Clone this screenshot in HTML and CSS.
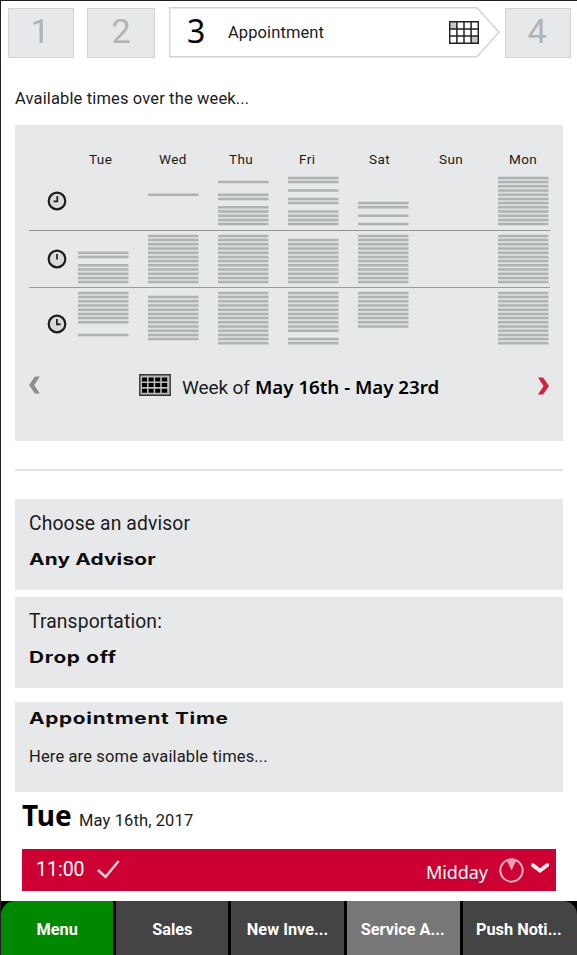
FILE: index.html
```html
<!DOCTYPE html>
<html lang="en">
<head>
<meta charset="utf-8">
<title>Service Appointment</title>
<link rel="stylesheet" href="styles.css">
</head>
<body>
<div class="app">
  <nav class="steps">
    <div class="step step-1"><span>1</span></div>
    <div class="step step-2"><span>2</span></div>
    <div class="step-current">
      <svg class="arrow" width="331" height="51" viewBox="0 0 331 51"><path d="M.8 .8H308L330 25.3L308 49.8H.8Z" fill="#fff" stroke="#d2d3d3" stroke-width="1.4"/></svg>
      <span class="number">3</span>
      <span class="label">Appointment</span>
      <svg class="calendar" width="30" height="23" viewBox="0 0 30 23"><path fill="#fff" d="M0 0h30v23H0z"/><path fill="#c8c8c8" d="M1 1h7v7H1zM22 15h7v7h-7z"/><path d="M.7 .7H29.3V22.3H.7ZM7.9 0V23M15 0V23M22.1 0V23M0 8H30M0 15H30" fill="none" stroke="#222" stroke-width="1.5"/></svg>
    </div>
    <div class="step step-4"><span>4</span></div>
  </nav>

  <main>
    <p class="intro">Available times over the week...</p>

    <section class="week">
      <div class="days"><span>Tue</span><span>Wed</span><span>Thu</span><span>Fri</span><span>Sat</span><span>Sun</span><span>Mon</span></div>
      <div class="period morning">
        <svg class="clock" width="20" height="20" viewBox="0 0 20 20"><circle cx="10" cy="10" r="8.3"/><path d="M10.3 5V10.4H6.5"/></svg>
      </div>
      <div class="period midday">
        <svg class="clock" width="20" height="20" viewBox="0 0 20 20"><circle cx="10" cy="10" r="8.3"/><path d="M10 5V10.5"/></svg>
      </div>
      <div class="period evening">
        <svg class="clock" width="20" height="20" viewBox="0 0 20 20"><circle cx="10" cy="10" r="8.3"/><path d="M9.9 5V10.4H13.7"/></svg>
      </div>
      <div class="pager">
        <svg class="prev" width="12" height="20" viewBox="0 0 12 20"><path d="M0 10L6 1.5H10.8L5.2 10L10.8 18.5H6Z" fill="#8c8d8e"/></svg>
        <svg class="grid-icon" width="32" height="22" viewBox="0 0 32 22"><path d="M.8 .8H31.2V21.2H.8Z" fill="#b9babb" stroke="#333" stroke-width="1.4"/><path d="M3 3.4h5v4H3zM9.6 3.4h5v4h-5zM16.2 3.4h5v4h-5zM22.8 3.4h5.4v4h-5.4zM3 9h5v4H3zM9.6 9h5v4h-5zM16.2 9h5v4h-5zM22.8 9h5.4v4h-5.4zM3 14.7h5v4H3zM9.6 14.7h5v4h-5zM16.2 14.7h5v4h-5zM22.8 14.7h5.4v4h-5.4z" fill="#000"/></svg>
        <span class="week-of">Week of</span>
        <strong>May 16th - May 23rd</strong>
        <svg class="next" width="12" height="20" viewBox="0 0 12 20"><path d="M12 10L6 1.5H1L6.6 10L1 18.5H6Z" fill="#d51f3d"/></svg>
      </div>
    </section>

    <hr>

    <section class="card advisor"><p>Choose an advisor</p><h2>Any Advisor</h2></section>
    <section class="card transport"><p>Transportation:</p><h2>Drop off</h2></section>
    <section class="card time"><h2>Appointment Time</h2><p>Here are some available times...</p></section>

    <div class="date"><strong>Tue</strong><span>May 16th, 2017</span></div>
    <div class="slot">
      <span class="hour">11:00</span>
      <svg class="check" width="23" height="19" viewBox="0 0 23 19"><path d="M1 10L8.5 17L21.7 1" fill="none" stroke="#f6ccd5" stroke-width="2.5"/></svg>
      <span class="part">Midday</span>
      <svg class="dial" width="25" height="25" viewBox="0 0 25 25"><circle cx="12.5" cy="12.5" r="11.2" fill="none" stroke="#f3b5c3" stroke-width="1.9"/><path d="M8 3Q12.5 .5 17 3L12.6 12.5Z" fill="#ef9db0"/></svg>
      <svg class="down" width="18" height="11" viewBox="0 0 18 11"><path d="M0 .5H3L9 5.2L15 .5H18V3.2L9 10L0 3.2Z" fill="#fbe9ec"/></svg>
    </div>
  </main>

  <footer class="tabs">
    <div class="tab menu">Menu</div>
    <div class="tab">Sales</div>
    <div class="tab">New Inve...</div>
    <div class="tab active">Service A...</div>
    <div class="tab">Push Noti...</div>
  </footer>
</div>
<script src="chart.js"></script>
</body>
</html>
```
FILE: styles.css
```css
* { box-sizing: border-box; }
body { margin: 0; background: #fff; color: #1b1b1b; font-family: Roboto, "Liberation Sans", sans-serif; }
p, h2 { margin: 0; }
svg { display: block; flex: none; }
.app { height: 955px; display: flex; flex-direction: column; overflow: hidden; border-top: 1px solid #231f20; border-left: 1px solid #231f20; }
.steps { display: flex; height: 50px; margin: 6px 0 0 6px; flex: none; }
.step { height: 50px; margin-top: 1px; border: 1.5px solid #d3d4d4; background: #e7e8e9; color: #b1b3b4; font-size: 34px; line-height: 44px; text-align: center; }
.step-1 { width: 66px; margin-left: 1px; padding-right: 2px; }
.step-2 { width: 68px; margin-left: 13px; }
.step-4 { width: 66px; margin-left: 5px; padding-right: 2px; }
.step-current { position: relative; display: flex; width: 331px; height: 51px; margin-left: 14px; }
.arrow { position: absolute; inset: 0; }
.number, .label, .calendar { position: relative; }
.number { width: 20px; margin-left: 18px; font: 32px/48px "Noto Sans", sans-serif; color: #000; }
.label { width: 97px; margin-left: 21px; font-size: 16.5px; line-height: 52px; white-space: nowrap; letter-spacing: .1px; }
.calendar { margin: 14px 0 0 124px; }
main { flex: 1; padding: 0 14px; }
.intro { height: 68px; padding-top: 32px; font-size: 16.5px; line-height: 20px; letter-spacing: .14px; }
.week { width: 548px; height: 316px; padding: 24px 14px 0; background: #e7e8e9; }
.days { display: grid; grid-template-columns: repeat(7, 70px); height: 24px; padding-left: 60px; font-size: 13.5px; line-height: 21px; letter-spacing: .4px; }
.period { display: grid; grid-template-columns: 48.5px repeat(7, 70px); width: 521px; }
.clock { margin-left: 18px; fill: #d9dadb; stroke: #1d1d1d; stroke-width: 2.2; }
.clock path { fill: none; stroke-width: 1.7; }
.morning { height: 58px; border-bottom: 1px solid #939596; }
.morning .clock { margin-top: 18px; }
.midday { height: 57px; border-bottom: 1px solid #999c9c; }
.midday .clock { margin-top: 18px; }
.evening { height: 77px; }
.evening .clock { margin-top: 26px; }
.bars { margin-top: 3px; stroke: #afb3b3; stroke-width: 2.5; }
.bars .gap { stroke: #dde0e0; stroke-width: 1.7; }
.pager { display: flex; height: 40px; }
.prev { margin-top: 10px; }
.grid-icon { margin: 9px 0 0 98px; }
.week-of { width: 66px; margin-left: 11px; font-size: 19px; line-height: 46px; letter-spacing: -.1px; white-space: nowrap; }
.pager strong { width: 186px; margin-left: 7px; font: 600 18.7px/43px "Noto Sans", sans-serif; color: #000; white-space: nowrap; }
.next { margin: 11px 0 0 97px; }
hr { width: 548px; height: 2px; margin: 28px 0; border: 0; background: #e2e3e3; }
.card { width: 548px; padding-left: 14px; background: #e7e8e9; }
.card p { white-space: nowrap; }
.advisor, .transport { height: 91px; margin-bottom: 7px; padding-top: 13px; font-size: 19.3px; line-height: 24px; letter-spacing: .13px; }
.transport { margin-bottom: 14px; }
.card h2 { display: block; width: max-content; font: 700 16px/24px Inter, sans-serif; color: #0d0d0d; transform-origin: left; transform: scaleX(1.3); letter-spacing: .54px; }
.card.advisor h2 { letter-spacing: .13px; }
.advisor h2, .transport h2 { margin-top: 11px; }
.time { height: 90px; padding-top: 4px; }
.time p { margin-top: 16px; font-size: 16.5px; line-height: 22px; letter-spacing: .14px; }
.date { display: flex; align-items: baseline; height: 57px; padding: 2px 0 0 7px; }
.date strong { width: 57px; font: 700 28px/42px "Noto Sans", sans-serif; color: #000; }
.date span { font-size: 16.5px; letter-spacing: .12px; }
.slot { display: flex; width: 534px; height: 42px; margin-left: 7px; padding-left: 14px; background: #cc0033; color: #fff; }
.hour { width: 49px; font-size: 19.5px; line-height: 41px; }
.check { margin: 11px 0 0 12px; }
.part { width: 62px; margin-left: 306px; font: 18px/47px "Noto Sans", sans-serif; letter-spacing: -.1px; }
.dial { margin: 9px 0 0 11px; }
.down { margin: 14px 0 0 7px; }
.tabs { display: flex; gap: 3px; height: 54px; flex: none; background: #000; margin-left: -1px; padding-left: 1px; color: #fff; }
.tab { flex: 1; background: #444; font-size: 16.3px; font-weight: 700; line-height: 58px; text-align: center; white-space: nowrap; }
.tab:last-child { border-top-right-radius: 14px; padding-right: 2px; }
.menu { background: #008800; border-top-left-radius: 14px; }
.active { background: #777; padding-right: 1px; }
```
FILE: chart.js
```js
// Open slots for Tue..Mon, counted from the start of each period.
const range = (a, b) => Array.from({ length: b - a + 1 }, (_, i) => a + i);
const open = {
  morning: [[], [4], [1, 4, 5, ...range(7, 11)], [0, 1, 3, 5, 6, ...range(8, 11)], [6, 7, 9, 11], [], range(0, 11)],
  midday: [[4, 5, ...range(7, 11)], range(0, 11), range(0, 11), range(1, 11), range(0, 11), [], range(0, 11)],
  evening: [[...range(0, 7), 10], range(1, 11), range(0, 12), [...range(0, 9), 11, 12], range(0, 8), [], range(0, 12)]
};
for (const [period, days] of Object.entries(open)) {
  const row = document.querySelector('.' + period);
  for (const slots of days) {
    const y = i => (1.9 + i * 4.2).toFixed(2);
    const gaps = slots.filter(i => slots.includes(i + 1)).map(i => `M0 ${y(i + .5)}H50.5`).join('');
    const bars = slots.map(i => `M0 ${y(i)}H50.5`).join('');
    row.insertAdjacentHTML('beforeend', `<svg class="bars" width="51" height="54"><path class="gap" d="${gaps}"/><path d="${bars}"/></svg>`);
  }
}
```
